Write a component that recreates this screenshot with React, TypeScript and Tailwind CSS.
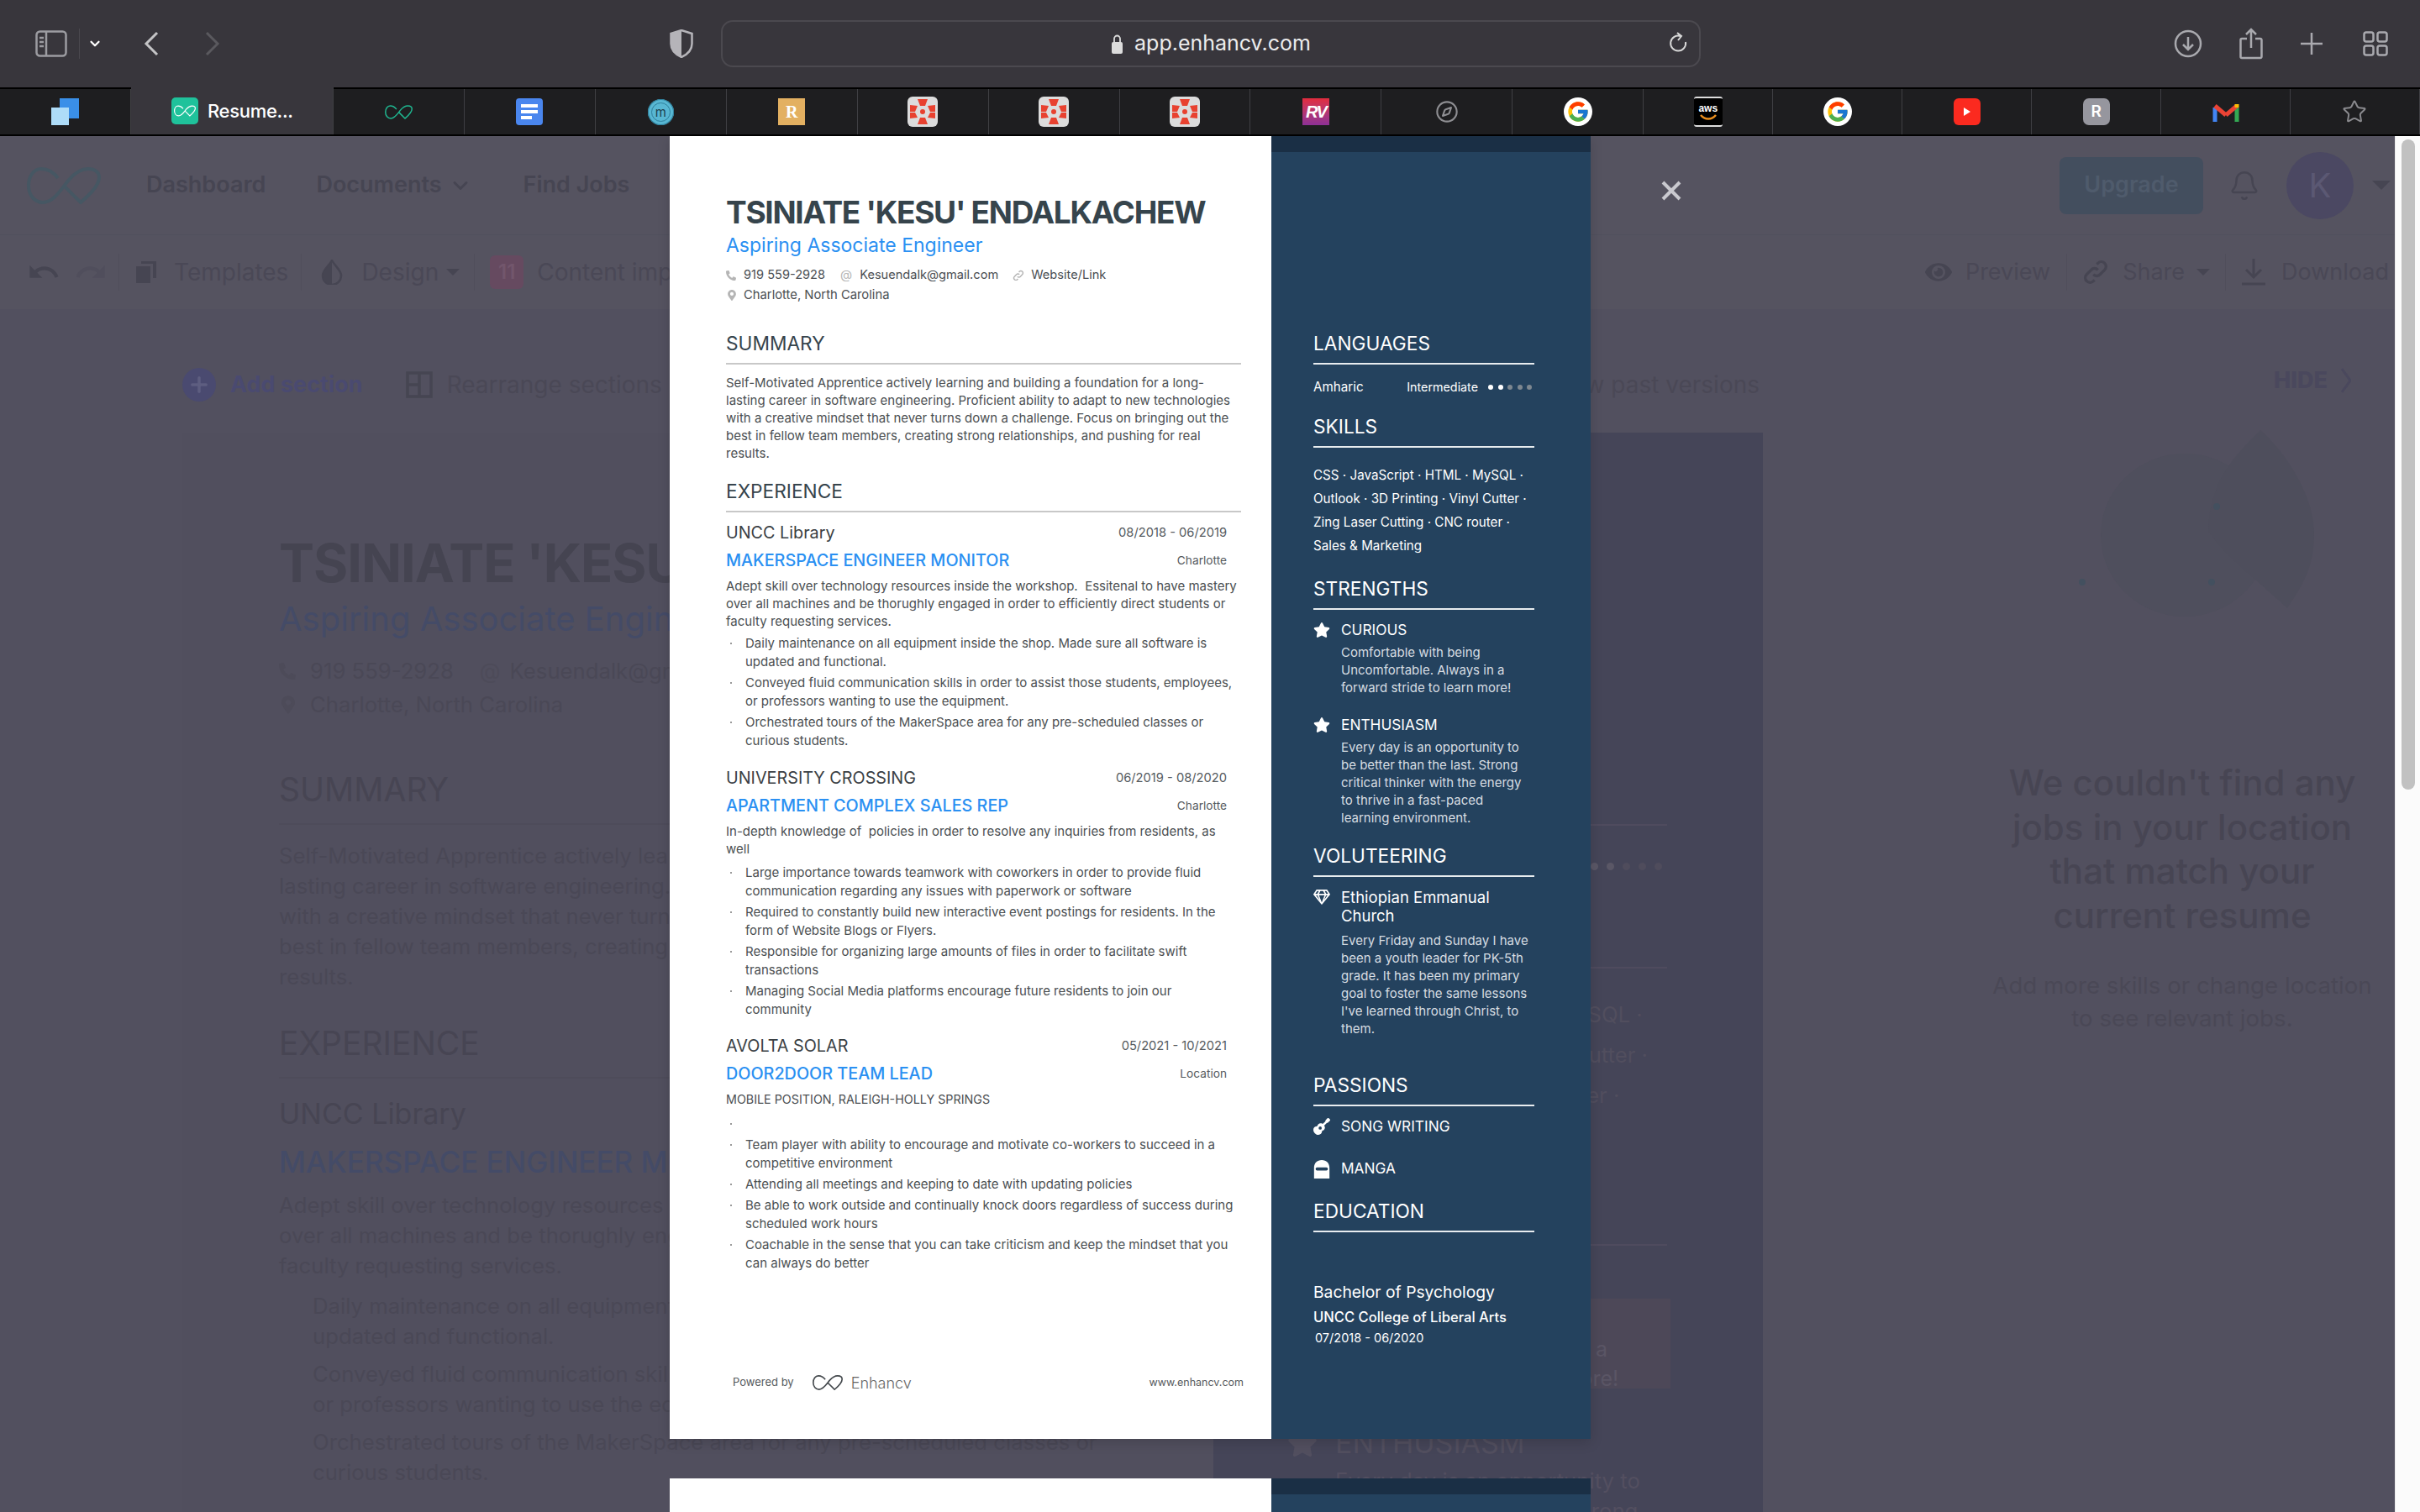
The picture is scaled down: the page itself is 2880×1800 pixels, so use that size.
import { Bell, ChevronDown, Compass, Plus, Star } from "lucide-react";
import { FaEye, FaGuitar, FaMapMarkerAlt, FaPhoneAlt, FaRegGem, FaStar } from "react-icons/fa";
import { FcGoogle } from "react-icons/fc";
import { MdRedo, MdUndo } from "react-icons/md";

const LOGO_PATH =
    "M37 13C31 5 24 2 17 2C8 2 2 11 2 22C2 33 9 42 19 42C32 42 41 26 50 15C56 8 64 2 73 2C81 2 86 6 86 12C86 23 72 35 64 42C60 38 51 29 43 21";

const Logo = ({ className }: { className: string }) => (
    <svg viewBox="0 0 88 44" fill="none" stroke="currentColor" strokeWidth="4" className={className}>
        <path d={LOGO_PATH} />
    </svg>
);

const BrowserBar = () => (
    <div className="relative flex h-[104px] items-center bg-[#38363c] text-[#a9a9ae]">
        <svg viewBox="0 0 38 32" fill="none" stroke="#9c9ca1" strokeWidth="2.5" className="ml-[42px] h-[32px] w-[38px]">
            <rect x="1.5" y="1.5" width="35" height="29" rx="4" />
            <path d="M13 2v28M5 9h5M5 14h5M5 19h5" />
        </svg>
        <div className="ml-[14px] h-[36px] w-px bg-[#4a484e]" />
        <ChevronDown className="ml-[9px] h-[18px] w-[18px] text-white" strokeWidth={3} />
        <svg viewBox="0 0 18 30" fill="none" stroke="#c4c4c6" strokeWidth="3" className="ml-[49px] h-[30px] w-[18px]">
            <path d="M16 2L3 15l13 13" />
        </svg>
        <svg viewBox="0 0 18 30" fill="none" stroke="#5a595e" strokeWidth="3" className="ml-[55px] h-[30px] w-[18px]">
            <path d="M2 2l13 13L2 28" />
        </svg>
        <svg viewBox="0 0 28 34" className="ml-[535px] h-[34px] w-[28px]">
            <path d="M14 1L1.500 5v12c0 8 6 13 12.500 16 6.500-3 12.500-8 12.500-16V5z" fill="none" stroke="#b5b4b9" strokeWidth="2.500" />
            <path d="M14 1L1.500 5v12c0 8 6 13 12.500 16z" fill="#b5b4b9" />
        </svg>
        <div className="relative ml-[33px] flex h-[56px] w-[1166px] items-center justify-center gap-[13px] rounded-[14px] border-2 border-[#4b494f]">
            <svg viewBox="0 0 14 24" className="h-[24px] w-[15px]">
                <path d="M3.500 11V6a3.500 3.500 0 017 0v5" fill="none" stroke="#dcdcdc" strokeWidth="1.800" />
                <rect x="0.500" y="10" width="13" height="14" rx="2" fill="#dcdcdc" />
            </svg>
            <span className="font-['Inter',sans-serif] text-[25px] text-[#ececec]">app.enhancv.com</span>
            <svg viewBox="0 0 24 28" fill="none" stroke="#d8d8d8" strokeWidth="2" className="absolute right-[12px] top-[12px] h-[28px] w-[24px]">
                <path d="M20 12a9 9 0 11-6-7M10 1l5 4-4 5" />
            </svg>
        </div>
        <svg viewBox="0 0 34 34" fill="none" stroke="currentColor" strokeWidth="2.500" className="ml-[563px] h-[34px] w-[34px]">
            <circle cx="17" cy="17" r="15" />
            <path d="M17 9v15M11 18l6 6 6-6" />
        </svg>
        <svg viewBox="0 0 28 38" fill="none" stroke="currentColor" strokeWidth="2.500" className="ml-[44px] h-[38px] w-[28px]">
            <path d="M9 13H3a1.500 1.500 0 00-1.500 1.500v20A1.500 1.500 0 003 36h22a1.500 1.500 0 001.500-1.500v-20A1.500 1.500 0 0025 13h-6M14 24V2M8 8l6-6 6 6" />
        </svg>
        <svg viewBox="0 0 26 26" fill="none" stroke="currentColor" strokeWidth="2.500" className="ml-[45px] h-[26px] w-[26px]">
            <path d="M13 0v26M0 13h26" />
        </svg>
        <svg viewBox="0 0 30 30" fill="none" stroke="currentColor" strokeWidth="2.500" className="ml-[48px] h-[30px] w-[30px]">
            <rect x="1.500" y="1.500" width="11" height="11" rx="2.500" />
            <rect x="17.500" y="1.500" width="11" height="11" rx="2.500" />
            <rect x="1.500" y="17.500" width="11" height="11" rx="2.500" />
            <rect x="17.500" y="17.500" width="11" height="11" rx="2.500" />
        </svg>
    </div>
);

const RedIcon = () => (
    <svg viewBox="0 0 36 36" className="h-[36px] w-[36px]">
        <rect width="36" height="36" rx="6" fill="#dcdcdc" />
        <g fill="#e8412f">
            <path d="M12 3h12l-3 8h-6z" />
            <path d="M12 33h12l-3-8h-6z" />
            <path d="M3 10l9 1-3 7H3z" />
            <path d="M33 10l-9 1 3 7h6z" />
            <path d="M3 26l9-1-3-6H3z" />
            <path d="M33 26l-9-1 3-6h6z" />
            <circle cx="18" cy="18" r="3" />
        </g>
    </svg>
);

const GoogleIcon = () => (
    <span className="flex h-[34px] w-[34px] items-center justify-center rounded-full bg-white">
        <FcGoogle className="h-[28px] w-[28px]" />
    </span>
);

const tabIcons = [
    <span className="relative block h-[32px] w-[33px]">
        <span className="absolute right-0 top-0 h-[24px] w-[23px] bg-[#3a8fe8]" />
        <span className="absolute bottom-0 left-0 h-[21px] w-[21px] bg-[#aedcf8]" />
    </span>,
    <></>,
    <Logo className="h-[17px] w-[33px] text-[#1fb58f]" />,
    <span className="flex h-[32px] w-[32px] flex-col justify-center gap-[3px] rounded-[4px] bg-[#4a86ee] px-[6px]">
        <span className="h-[4px] w-full bg-white" />
        <span className="h-[4px] w-full bg-white" />
        <span className="h-[4px] w-[13px] bg-white" />
    </span>,
    <span className="flex h-[31px] w-[31px] items-center justify-center rounded-full bg-[#58b7d3] ring-1 ring-inset ring-[#2e7f9b]">
        <span className="flex h-[23px] w-[23px] items-center justify-center rounded-full border border-[#2e7f9b] font-['Inter',sans-serif] text-[15px] leading-none text-[#1c3f4d]">m</span>
    </span>,
    <span className="flex h-[32px] w-[32px] items-center justify-center bg-[#e3b061] font-['Liberation_Serif',serif] text-[20px] font-bold text-white">R</span>,
    <RedIcon />,
    <RedIcon />,
    <RedIcon />,
    <span className="flex h-[32px] w-[32px] items-center justify-center bg-gradient-to-b from-[#e22b3c] to-[#8d2f96] font-['Liberation_Sans',sans-serif] text-[20px] font-bold italic tracking-[-2px] text-white">RV</span>,
    <Compass className="h-[28px] w-[28px] text-[#8e8e92]" strokeWidth={1.8} />,
    <GoogleIcon />,
    <span className="flex h-[36px] w-[34px] flex-col items-center justify-center rounded-[3px] border-y-2 border-[#ddd] bg-black font-['Liberation_Sans',sans-serif] text-[12px] font-bold leading-[14px] text-white">
        aws
        <svg viewBox="0 0 20 8" fill="none" stroke="#e98d1c" strokeWidth="2.500" className="h-[8px] w-[20px]">
            <path d="M1 1c5 6 13 6 18 0" />
        </svg>
    </span>,
    <GoogleIcon />,
    <span className="flex h-[32px] w-[32px] items-center justify-center rounded-[6px] bg-[#fb2a1f]">
        <span className="h-0 w-0 border-y-[5px] border-l-[8px] border-y-transparent border-l-white" />
    </span>,
    <span className="flex h-[32px] w-[32px] items-center justify-center rounded-[7px] bg-[#96969e] font-['Inter',sans-serif] text-[19px] font-semibold text-white">R</span>,
    <svg viewBox="0 0 32 24" fill="none" strokeWidth="5" className="h-[24px] w-[32px]">
        <path d="M3 24V7" stroke="#4285f4" />
        <path d="M29 24V7" stroke="#34a853" />
        <path d="M3 5l13 11" stroke="#ea4335" />
        <path d="M29 5L16 16" stroke="#ea4335" />
        <path d="M29 3l0 4" stroke="#fbbc04" />
    </svg>,
    <Star className="h-[30px] w-[30px] text-[#8a8a8e]" strokeWidth={1.6} />,
];

const TabBar = () => (
    <div className="flex h-[58px] border-y-2 border-black bg-[#1e1e20]">
        {tabIcons.map((icon, index) =>
            index === 1 ? (
                <div key={index} className="-mt-[2px] flex w-[241px] items-center gap-[11px] border-r border-[#3f3f43] bg-[#38363c] pl-[48px]">
                    <span className="flex h-[32px] w-[32px] items-center justify-center rounded-[5px] bg-[#1fc29b]">
                        <Logo className="h-[14px] w-[26px] text-white" />
                    </span>
                    <span className="font-['Inter',sans-serif] text-[22px] font-medium tracking-[-0.3px] text-white">Resume...</span>
                </div>
            ) : (
                <div
                    key={index}
                    className={`flex items-center justify-center border-r border-[#3f3f43] ${index < 12 ? "w-[156px]" : "w-[154px]"}`}
                >
                    {icon}
                </div>
            )
        )}
    </div>
);

const dimBody = "font-['Inter',sans-serif] text-[25.700px] leading-[36px] text-[#4a4856] whitespace-nowrap";
const dimHeading = "border-b-2 border-[#4e4c5a] pb-[16px] font-['Inter',sans-serif] text-[39px] leading-[48px] text-[#474553]";

const NavBar = () => (
    <div className="flex h-[118px] shrink-0 items-center border-b border-[#51505d] pr-[5px] font-['Inter',sans-serif] text-[27px] font-semibold text-[#464552]">
        <Logo className="ml-[32px] h-[44px] w-[88px] text-[#465763]" />
        <span className="ml-[54px]">Dashboard</span>
        <span className="ml-[60px]">Documents</span>
        <ChevronDown className="ml-[8px] h-[28px] w-[28px]" strokeWidth={2.5} />
        <span className="ml-[61px]">Find Jobs</span>
        <div className="ml-auto flex h-[68px] w-[171px] items-center justify-center rounded-[8px] bg-[#434e5e] text-[#4f5b6c]">Upgrade</div>
        <Bell className="ml-[30px] h-[38px] w-[38px]" strokeWidth={1.6} />
        <div className="ml-[31px] flex h-[80px] w-[80px] items-center justify-center rounded-full bg-[#4b4862] text-[40px] font-normal text-[#5b5873]">K</div>
        <span className="ml-[22px] h-0 w-0 border-x-[11px] border-t-[11px] border-x-transparent border-t-[#464552]" />
    </div>
);

const ToolBar = () => (
    <div className="flex h-[88px] shrink-0 items-center font-['Inter',sans-serif] text-[28px] text-[#4a4856]">
        <MdUndo className="ml-[32px] h-[40px] w-[40px] text-[#464552]" />
        <MdRedo className="ml-[16px] h-[40px] w-[40px] text-[#504e5c]" />
        <div className="ml-[13px] h-[44px] w-px bg-[#504e5b]" />
        <svg viewBox="0 0 24 26" className="ml-[20px] h-[26px] w-[24px] fill-[#464552]">
            <path d="M0 6h17v20H0zM6 0h18v20h-4V3H6z" />
        </svg>
        <span className="ml-[21px]">Templates</span>
        <div className="ml-[15px] h-[44px] w-px bg-[#504e5b]" />
        <svg viewBox="0 0 26 30" className="ml-[23px] h-[30px] w-[26px]">
            <path d="M13 1C9 8 2 13 2 19a11 11 0 0022 0C24 13 17 8 13 1z" fill="none" stroke="#464552" strokeWidth="2.500" />
            <path d="M13 1C9 8 2 13 2 19a11 11 0 0011 11z" fill="#464552" />
        </svg>
        <span className="ml-[22px]">Design</span>
        <span className="ml-[9px] h-0 w-0 border-x-[8px] border-t-[8px] border-x-transparent border-t-[#464552]" />
        <div className="ml-[17px] h-[44px] w-px bg-[#504e5b]" />
        <span className="ml-[18px] flex h-[40px] w-[40px] items-center justify-center rounded-[6px] bg-[#664a60] text-[24px] font-semibold text-[#72566c]">11</span>
        <span className="ml-[16px] whitespace-nowrap">Content improvements</span>
        <div className="ml-auto flex items-center text-[27px]">
            <FaEye className="h-[32px] w-[32px] text-[#464552]" />
            <span className="ml-[16px]">Preview</span>
            <div className="ml-[19px] h-[44px] w-px bg-[#504e5b]" />
            <svg viewBox="0 0 24 24" fill="none" stroke="#464552" strokeWidth="2.500" className="ml-[18px] h-[32px] w-[32px]">
                <path d="M10 14a4 4 0 006 0l4-4a4 4 0 00-6-6l-1 1M14 10a4 4 0 00-6 0l-4 4a4 4 0 006 6l1-1" />
            </svg>
            <span className="ml-[16px]">Share</span>
            <span className="ml-[14px] h-0 w-0 border-x-[8px] border-t-[8px] border-x-transparent border-t-[#464552]" />
            <div className="ml-[18px] h-[44px] w-px bg-[#504e5b]" />
            <svg viewBox="0 0 28 32" fill="none" stroke="#464552" strokeWidth="3" className="ml-[19px] h-[32px] w-[28px]">
                <path d="M14 0v21M5 13l9 9 9-9M0 30h28" />
            </svg>
            <span className="ml-[19px] mr-[7px]">Download</span>
        </div>
    </div>
);

const ResumeUnder = () => (
    <div className="flex min-h-0 flex-1 overflow-hidden bg-[#514f5e]">
        <div className="w-[1227px] overflow-hidden pl-[115px] pt-[117px] font-['Inter',sans-serif]">
            <div className="text-[63px] font-bold leading-[76px] tracking-[-1px] whitespace-nowrap text-[#454451]">TSINIATE 'KESU' ENDALKACHEW</div>
            <div className="mt-[5px] text-[40px] leading-[48px] text-[#444b67] whitespace-nowrap">Aspiring Associate Engineer</div>
            <div className={`mt-[20px] flex items-center ${dimBody}`}>
                <FaPhoneAlt className="h-[20px] w-[20px] text-[#4d4b59]" />
                <span className="ml-[17px]">919 559-2928</span>
                <span className="ml-[31px] text-[#4d4b59]">@</span>
                <span className="ml-[11px]">Kesuendalk@gmail.com</span>
            </div>
            <div className={`mt-[4px] flex items-center ${dimBody}`}>
                <FaMapMarkerAlt className="ml-[3px] h-[22px] w-[16px] text-[#4d4b59]" />
                <span className="ml-[18px]">Charlotte, North Carolina</span>
            </div>
            <div className={`mt-[59px] ${dimHeading}`}>SUMMARY</div>
            <div className={`mt-[19px] ${dimBody}`}>
                <div>Self-Motivated Apprentice actively learning and building a foundation for a long-</div>
                <div>lasting career in software engineering. Proficient ability to adapt to new technologies</div>
                <div>with a creative mindset that never turns down a challenge. Focus on bringing out the</div>
                <div>best in fellow team members, creating strong relationships, and pushing for real</div>
                <div>results.</div>
            </div>
            <div className={`mt-[37px] ${dimHeading}`}>EXPERIENCE</div>
            <div className="mt-[20px] text-[34px] leading-[44px] text-[#474553]">UNCC Library</div>
            <div className="mt-[13px] text-[35px] font-medium leading-[44px] whitespace-nowrap text-[#444b67]">MAKERSPACE ENGINEER MONITOR</div>
            <div className={`mt-[12px] ${dimBody} leading-[34.500px]`}>
                <div>Adept skill over technology resources inside the workshop.  Essitenal to have mastery</div>
                <div>over all machines and be thorughly engaged in order to efficiently direct students or</div>
                <div>faculty requesting services.</div>
            </div>
            <div className={`mt-[12px] flex flex-col gap-[9px] pl-[40px] ${dimBody} leading-[35px]`}>
                <div>
                    <div>Daily maintenance on all equipment inside the shop. Made sure all software is</div>
                    <div>updated and functional.</div>
                </div>
                <div>
                    <div>Conveyed fluid communication skills in order to assist those students, employees,</div>
                    <div>or professors wanting to use the equipment.</div>
                </div>
                <div>
                    <div>Orchestrated tours of the MakerSpace area for any pre-scheduled classes or</div>
                    <div>curious students.</div>
                </div>
            </div>
        </div>
        <div className="w-[654px] bg-[#454558] pl-[88px] font-['Inter',sans-serif]">
            <div className="mt-[466px] h-[2px] w-[452px] bg-[#4f4b5e]" />
            <div className="mt-[44px] flex w-[452px] justify-end gap-[10px] pr-[6px]">
                {[0, 1, 2, 3, 4].map((dot) => (
                    <span key={dot} className={`h-[9px] w-[9px] rounded-full ${dot < 2 ? "bg-[#5a5766]" : "bg-[#4f4c5c]"}`} />
                ))}
            </div>
            <div className="mt-[115px] h-[2px] w-[452px] bg-[#4f4b5e]" />
            <div className={`mt-[31px] ${dimBody} leading-[48px] text-[#514e5e]`}>
                <div>CSS · JavaScript · HTML · MySQL ·</div>
                <div>Outlook · 3D Printing · Vinyl Cutter ·</div>
                <div>Zing Laser Cutting · CNC router ·</div>
            </div>
            <div className="mt-[153px] h-[2px] w-[452px] bg-[#4f4b5e]" />
            <div className="mt-[63px] h-[107px] w-[456px] bg-[#4d4858] pl-[57px] pt-[43px] text-[25px] leading-[35px] text-[#5a5565]">
                <div>Uncomfortable. Always in a</div>
                <div className="whitespace-nowrap">forward stride to learn more!</div>
            </div>
            <div className="mt-[45px] flex items-center gap-[21px] text-[34px] leading-[40px] text-[#524f5f]">
                <FaStar className="h-[36px] w-[36px]" />
                ENTHUSIASM
            </div>
            <div className={`ml-[57px] mt-[7px] ${dimBody} text-[#534f60]`}>
                <div>Every day is an opportunity to</div>
                <div>be better than the last. Strong</div>
            </div>
        </div>
    </div>
);

const JobsPanel = () => (
    <div className="flex w-[533px] flex-col items-center pl-[27px] font-['Inter',sans-serif]">
        <div className="flex h-[144px] w-full items-start pl-[362px] pt-[70px] text-[#4a485d]">
            <span className="text-[27px] font-extrabold leading-[30px]">HIDE</span>
            <svg viewBox="0 0 12 30" fill="none" stroke="currentColor" strokeWidth="3" className="ml-[16px] h-[30px] w-[12px]">
                <path d="M1 1l10 14L1 29" />
            </svg>
        </div>
        <svg viewBox="0 0 300 230" className="ml-[26px] h-[230px] w-[300px]">
            <ellipse cx="140" cy="125" rx="100" ry="97" fill="#4f4f5d" />
            <path d="M230 0c-30 30-60 60-62 120 20 30 60 60 94 92 20-30 32-50 32-90 0-40-30-92-64-122z" fill="#4e4e5c" />
            <circle cx="18" cy="181" r="4" fill="#43505f" />
            <circle cx="172" cy="181" r="4" fill="#43505f" />
            <circle cx="178" cy="91" r="4" fill="#43505f" />
        </svg>
        <div className="mt-[164px] text-center text-[42px] font-medium leading-[52.500px] whitespace-nowrap text-[#474553]">
            We couldn't find any
            <br />
            jobs in your location
            <br />
            that match your
            <br />
            current resume
        </div>
        <div className="mt-[38px] text-center text-[27.700px] leading-[39px] whitespace-nowrap text-[#4a4856]">
            Add more skills or change location
            <br />
            to see relevant jobs.
        </div>
    </div>
);

const UnderPage = () => (
    <div className="flex min-w-0 flex-1 flex-col overflow-hidden bg-[#555360]">
        <NavBar />
        <ToolBar />
        <div className="flex min-h-0 flex-1 overflow-hidden bg-[#52505f]">
            <div className="ml-[217px] flex w-[1881px] shrink-0 flex-col">
                <div className="flex h-[147px] shrink-0 justify-between pt-[70px] font-['Inter',sans-serif] text-[28px] text-[#4a4856]">
                    <div className="flex h-[40px] items-center">
                        <span className="flex h-[40px] w-[40px] items-center justify-center rounded-full bg-[#4a4a70]">
                            <Plus className="h-[28px] w-[28px] text-[#5e5e80]" strokeWidth={3} />
                        </span>
                        <span className="ml-[17px] text-[27px] font-bold text-[#4a4a70]">Add section</span>
                        <svg viewBox="0 0 32 32" fill="none" stroke="#464552" strokeWidth="3.500" className="ml-[51px] h-[32px] w-[32px]">
                            <rect x="2" y="2" width="28" height="28" />
                            <path d="M16 2v28M2 16h14" />
                        </svg>
                        <span className="ml-[17px]">Rearrange sections</span>
                    </div>
                    <span className="mr-[4px] flex h-[40px] items-center">View past versions</span>
                </div>
                <ResumeUnder />
            </div>
            <div className="w-[219px] shrink-0" />
            <JobsPanel />
        </div>
    </div>
);

const ScrollBar = () => (
    <div className="flex w-[30px] shrink-0 justify-center border-l border-[#ececec] bg-[#fbfbfb] pt-[4px]">
        <div className="h-[774px] w-[16px] rounded-full bg-[#c1c1c1]" />
    </div>
);

const MainBody = ({ lines, className = "" }: { lines: string[]; className?: string }) => (
    <div className={`text-[15px] leading-[21px] text-[#4b4f52] ${className}`}>
        {lines.map((line, index) => (
            <div key={index} className="whitespace-pre">{line}</div>
        ))}
    </div>
);

const MainHeading = ({ title, className }: { title: string; className: string }) => (
    <div className={`border-b-2 border-[#c8c8c8] pb-[9px] text-[22.700px] leading-[28px] text-[#36444c] ${className}`}>{title}</div>
);

const BulletList = ({ items, className }: { items: string[][]; className: string }) => (
    <div className={`flex flex-col gap-[3px] text-[15px] leading-[22px] text-[#4b4f52] ${className}`}>
        {items.map((item, index) => (
            <div key={index} className="relative h-auto min-h-[22px] pl-[23px]">
                <span className="absolute left-[5px] top-[10px] h-[2px] w-[2px] rounded-full bg-[#777]" />
                {item.map((line) => (
                    <div key={line} className="whitespace-nowrap">{line}</div>
                ))}
            </div>
        ))}
    </div>
);

const JobHead = ({ company, role, date, place, className }: { company: string; role: string; date: string; place: string; className: string }) => (
    <div className={className}>
        <div className="flex items-center justify-between pr-[17px] leading-[26px]">
            <span className="text-[19.800px] text-[#3a4044]">{company}</span>
            <span className="text-[14.700px] text-[#555a5e]">{date}</span>
        </div>
        <div className="mt-[7px] flex items-center justify-between pr-[17px] leading-[26px]">
            <span className="text-[19.800px] font-medium text-[#2a90f2]">{role}</span>
            <span className="text-[13.700px] text-[#555a5e]">{place}</span>
        </div>
    </div>
);

const Sidebar = ({ children }: { children?: React.ReactNode }) => (
    <div className="w-[380px] bg-[#24425e]">
        <div className="h-[19px] bg-[#1a2f45]" />
        <div className="ml-[50px] w-[263px]">{children}</div>
    </div>
);

const SideHeading = ({ title, className }: { title: string; className: string }) => (
    <div className={`border-b-2 border-[#e8ecef] pb-[9px] text-[22.700px] leading-[28px] text-white ${className}`}>{title}</div>
);

const SideItem = ({
    icon,
    title,
    lines,
    className,
    gap = "mt-[6px]",
    titleSize = "text-[17.300px] leading-[21px]",
}: {
    icon: React.ReactNode;
    title: string[];
    lines: string[];
    className: string;
    gap?: string;
    titleSize?: string;
}) => (
    <div className={`flex text-white ${className}`}>
        <span className="flex w-[33px] shrink-0 pt-[1px]">{icon}</span>
        <div className="min-w-0">
            <div className={titleSize}>
                {title.map((line) => (
                    <div key={line}>{line}</div>
                ))}
            </div>
            {lines.length > 0 && (
                <div className={`${gap} whitespace-nowrap text-[15px] leading-[21px] text-[#d7dde2]`}>
                    {lines.map((line) => (
                        <div key={line}>{line}</div>
                    ))}
                </div>
            )}
        </div>
    </div>
);

const PageOne = () => (
    <div className="flex h-[1551px] font-['Inter',sans-serif] shadow-[0_4px_14px_rgba(0,0,0,0.15)]">
        <div className="flex w-[716px] flex-col bg-white pl-[67px] pr-[36px] pt-[68px]">
            <div className="text-[37px] font-bold leading-[46px] tracking-[-1.300px] whitespace-nowrap text-[#36444c]">TSINIATE 'KESU' ENDALKACHEW</div>
            <div className="mt-[1px] text-[23px] leading-[30px] text-[#2a90f2]">Aspiring Associate Engineer</div>
            <div className="mt-[11px] flex h-[20px] items-center text-[14.600px] text-[#4a4e52]">
                <FaPhoneAlt className="h-[12px] w-[12px] text-[#b5b5b5]" />
                <span className="ml-[9px]">919 559-2928</span>
                <span className="ml-[18px] text-[#b5b5b5]">@</span>
                <span className="ml-[9px]">Kesuendalk@gmail.com</span>
                <svg viewBox="0 0 24 24" fill="none" stroke="#b5b5b5" strokeWidth="2.500" className="ml-[17px] h-[14px] w-[14px]">
                    <path d="M10 14a4 4 0 006 0l4-4a4 4 0 00-6-6l-1 1M14 10a4 4 0 00-6 0l-4 4a4 4 0 006 6l1-1" />
                </svg>
                <span className="ml-[8px]">Website/Link</span>
            </div>
            <div className="mt-[3px] flex h-[20px] items-center text-[14.800px] text-[#4a4e52]">
                <FaMapMarkerAlt className="ml-[2px] h-[13px] w-[10px] text-[#b5b5b5]" />
                <span className="ml-[9px]">Charlotte, North Carolina</span>
            </div>
            <MainHeading title="SUMMARY" className="mt-[34px]" />
            <MainBody
                className="mt-[11px]"
                lines={[
                    "Self-Motivated Apprentice actively learning and building a foundation for a long-",
                    "lasting career in software engineering. Proficient ability to adapt to new technologies",
                    "with a creative mindset that never turns down a challenge. Focus on bringing out the",
                    "best in fellow team members, creating strong relationships, and pushing for real",
                    "results.",
                ]}
            />
            <MainHeading title="EXPERIENCE" className="mt-[21px]" />
            <JobHead className="mt-[11px]" company="UNCC Library" role="MAKERSPACE ENGINEER MONITOR" date="08/2018 - 06/2019" place="Charlotte" />
            <MainBody
                className="mt-[7px] leading-[20px]"
                lines={[
                    "Adept skill over technology resources inside the workshop.  Essitenal to have mastery",
                    "over all machines and be thorughly engaged in order to efficiently direct students or",
                    "faculty requesting services.",
                ]}
            />
            <BulletList
                className="mt-[5px]"
                items={[
                    ["Daily maintenance on all equipment inside the shop. Made sure all software is", "updated and functional."],
                    ["Conveyed fluid communication skills in order to assist those students, employees,", "or professors wanting to use the equipment."],
                    ["Orchestrated tours of the MakerSpace area for any pre-scheduled classes or", "curious students."],
                ]}
            />
            <JobHead className="mt-[20px]" company="UNIVERSITY CROSSING" role="APARTMENT COMPLEX SALES REP" date="06/2019 - 08/2020" place="Charlotte" />
            <MainBody
                className="mt-[7px] leading-[19px]"
                lines={["In-depth knowledge of  policies in order to resolve any inquiries from residents, as", "well"]}
            />
            <BulletList
                className="mt-[7px]"
                items={[
                    ["Large importance towards teamwork with coworkers in order to provide fluid", "communication regarding any issues with paperwork or software"],
                    ["Required to constantly build new interactive event postings for residents. In the", "form of Website Blogs or Flyers."],
                    ["Responsible for organizing large amounts of files in order to facilitate swift", "transactions"],
                    ["Managing Social Media platforms encourage future residents to join our", "community"],
                ]}
            />
            <JobHead className="mt-[19px]" company="AVOLTA SOLAR" role="DOOR2DOOR TEAM LEAD" date="05/2021 - 10/2021" place="Location" />
            <div className="mt-[8px] text-[14.300px] leading-[20px] text-[#4b4f52]">MOBILE POSITION, RALEIGH-HOLLY SPRINGS</div>
            <BulletList
                className="mt-[8px]"
                items={[
                    [""],
                    ["Team player with ability to encourage and motivate co-workers to succeed in a", "competitive environment"],
                    ["Attending all meetings and keeping to date with updating policies"],
                    ["Be able to work outside and continually knock doors regardless of success during", "scheduled work hours"],
                    ["Coachable in the sense that you can take criticism and keep the mindset that you", "can always do better"],
                ]}
            />
            <div className="mb-[57px] -mr-[3px] ml-[8px] mt-auto flex h-[20px] items-center text-[#55595c]">
                <span className="text-[13px]">Powered by</span>
                <Logo className="ml-[22px] h-[18px] w-[36px] text-[#44494d]" />
                <span className="ml-[10px] text-[18px] font-light text-[#666]">Enhancv</span>
                <span className="ml-auto text-[12.500px]">www.enhancv.com</span>
            </div>
        </div>
        <Sidebar>
            <SideHeading title="LANGUAGES" className="mt-[214px]" />
            <div className="mt-[17px] flex h-[20px] items-center text-[15.200px] text-white">
                <span>Amharic</span>
                <span className="ml-auto text-[14.300px]">Intermediate</span>
                <span className="ml-[12px] flex gap-[5.500px] pr-[3px]">
                    {[0, 1, 2, 3, 4].map((dot) => (
                        <span key={dot} className={`h-[6px] w-[6px] rounded-full ${dot < 2 ? "bg-white" : "bg-[#7d8790]"}`} />
                    ))}
                </span>
            </div>
            <SideHeading title="SKILLS" className="mt-[23px]" />
            <div className="mt-[19px] text-[15.200px] leading-[28px] whitespace-nowrap text-white">
                <div>CSS · JavaScript · HTML · MySQL ·</div>
                <div>Outlook · 3D Printing · Vinyl Cutter ·</div>
                <div>Zing Laser Cutting · CNC router ·</div>
                <div>Sales &amp; Marketing</div>
            </div>
            <SideHeading title="STRENGTHS" className="mt-[23px]" />
            <SideItem
                icon={<FaStar className="h-[20px] w-[20px]" />}
                title={["CURIOUS"]}
                lines={["Comfortable with being", "Uncomfortable. Always in a", "forward stride to learn more!"]}
                className="mt-[13px]"
            />
            <SideItem
                icon={<FaStar className="h-[20px] w-[20px]" />}
                title={["ENTHUSIASM"]}
                lines={["Every day is an opportunity to", "be better than the last. Strong", "critical thinker with the energy", "to thrive in a fast-paced", "learning environment."]}
                className="mt-[23px]"
            />
            <SideHeading title="VOLUTEERING" className="mt-[21px]" />
            <SideItem
                icon={<FaRegGem className="h-[20px] w-[20px]" />}
                title={["Ethiopian Emmanual", "Church"]}
                lines={["Every Friday and Sunday I have", "been a youth leader for PK-5th", "grade. It has been my primary", "goal to foster the same lessons", "I've learned through Christ, to", "them."]}
                className="mt-[13px]"
                gap="mt-[8px]"
                titleSize="text-[18.500px] leading-[22px]"
            />
            <SideHeading title="PASSIONS" className="mt-[43px]" />
            <SideItem icon={<FaGuitar className="h-[20px] w-[20px]" />} title={["SONG WRITING"]} lines={[]} className="mt-[13px]" />
            <SideItem
                icon={
                    <svg viewBox="0 0 20 24" className="h-[22px] w-[20px] fill-white">
                        <path d="M0 24V10C0 4 4 0 10 0s10 4 10 10v14zM4 9.500a2 2 0 000 4h12a2 2 0 000-4z" fillRule="evenodd" />
                    </svg>
                }
                title={["MANGA"]}
                lines={[]}
                className="mt-[29px]"
            />
            <SideHeading title="EDUCATION" className="mt-[25px]" />
            <div className="mt-[59px] text-[19.300px] leading-[24px] text-white">Bachelor of Psychology</div>
            <div className="mt-[8px] text-[16.600px] font-medium leading-[20px] text-white">UNCC College of Liberal Arts</div>
            <div className="ml-[2px] mt-[6px] text-[14.500px] leading-[18px] text-white">07/2018 - 06/2020</div>
        </Sidebar>
    </div>
);

const PreviewModal = () => (
    <div className="absolute left-[797px] top-0 w-[1096px]">
        <PageOne />
        <div className="mt-[47px] flex h-[100px]">
            <div className="w-[716px] bg-white" />
            <Sidebar />
        </div>
        <svg viewBox="0 0 24 24" fill="none" stroke="#c9c9cf" strokeWidth="4" className="absolute left-[1180px] top-[53px] h-[24px] w-[24px]">
            <path d="M2 2l20 20M22 2L2 22" />
        </svg>
    </div>
);

const App = () => {
    return (
        <div className="flex h-[1800px] w-[2880px] flex-col overflow-hidden">
            <BrowserBar />
            <TabBar />
            <div className="relative flex min-h-0 flex-1 overflow-hidden">
                <UnderPage />
                <ScrollBar />
                <PreviewModal />
            </div>
        </div>
    );
};

export default App;
